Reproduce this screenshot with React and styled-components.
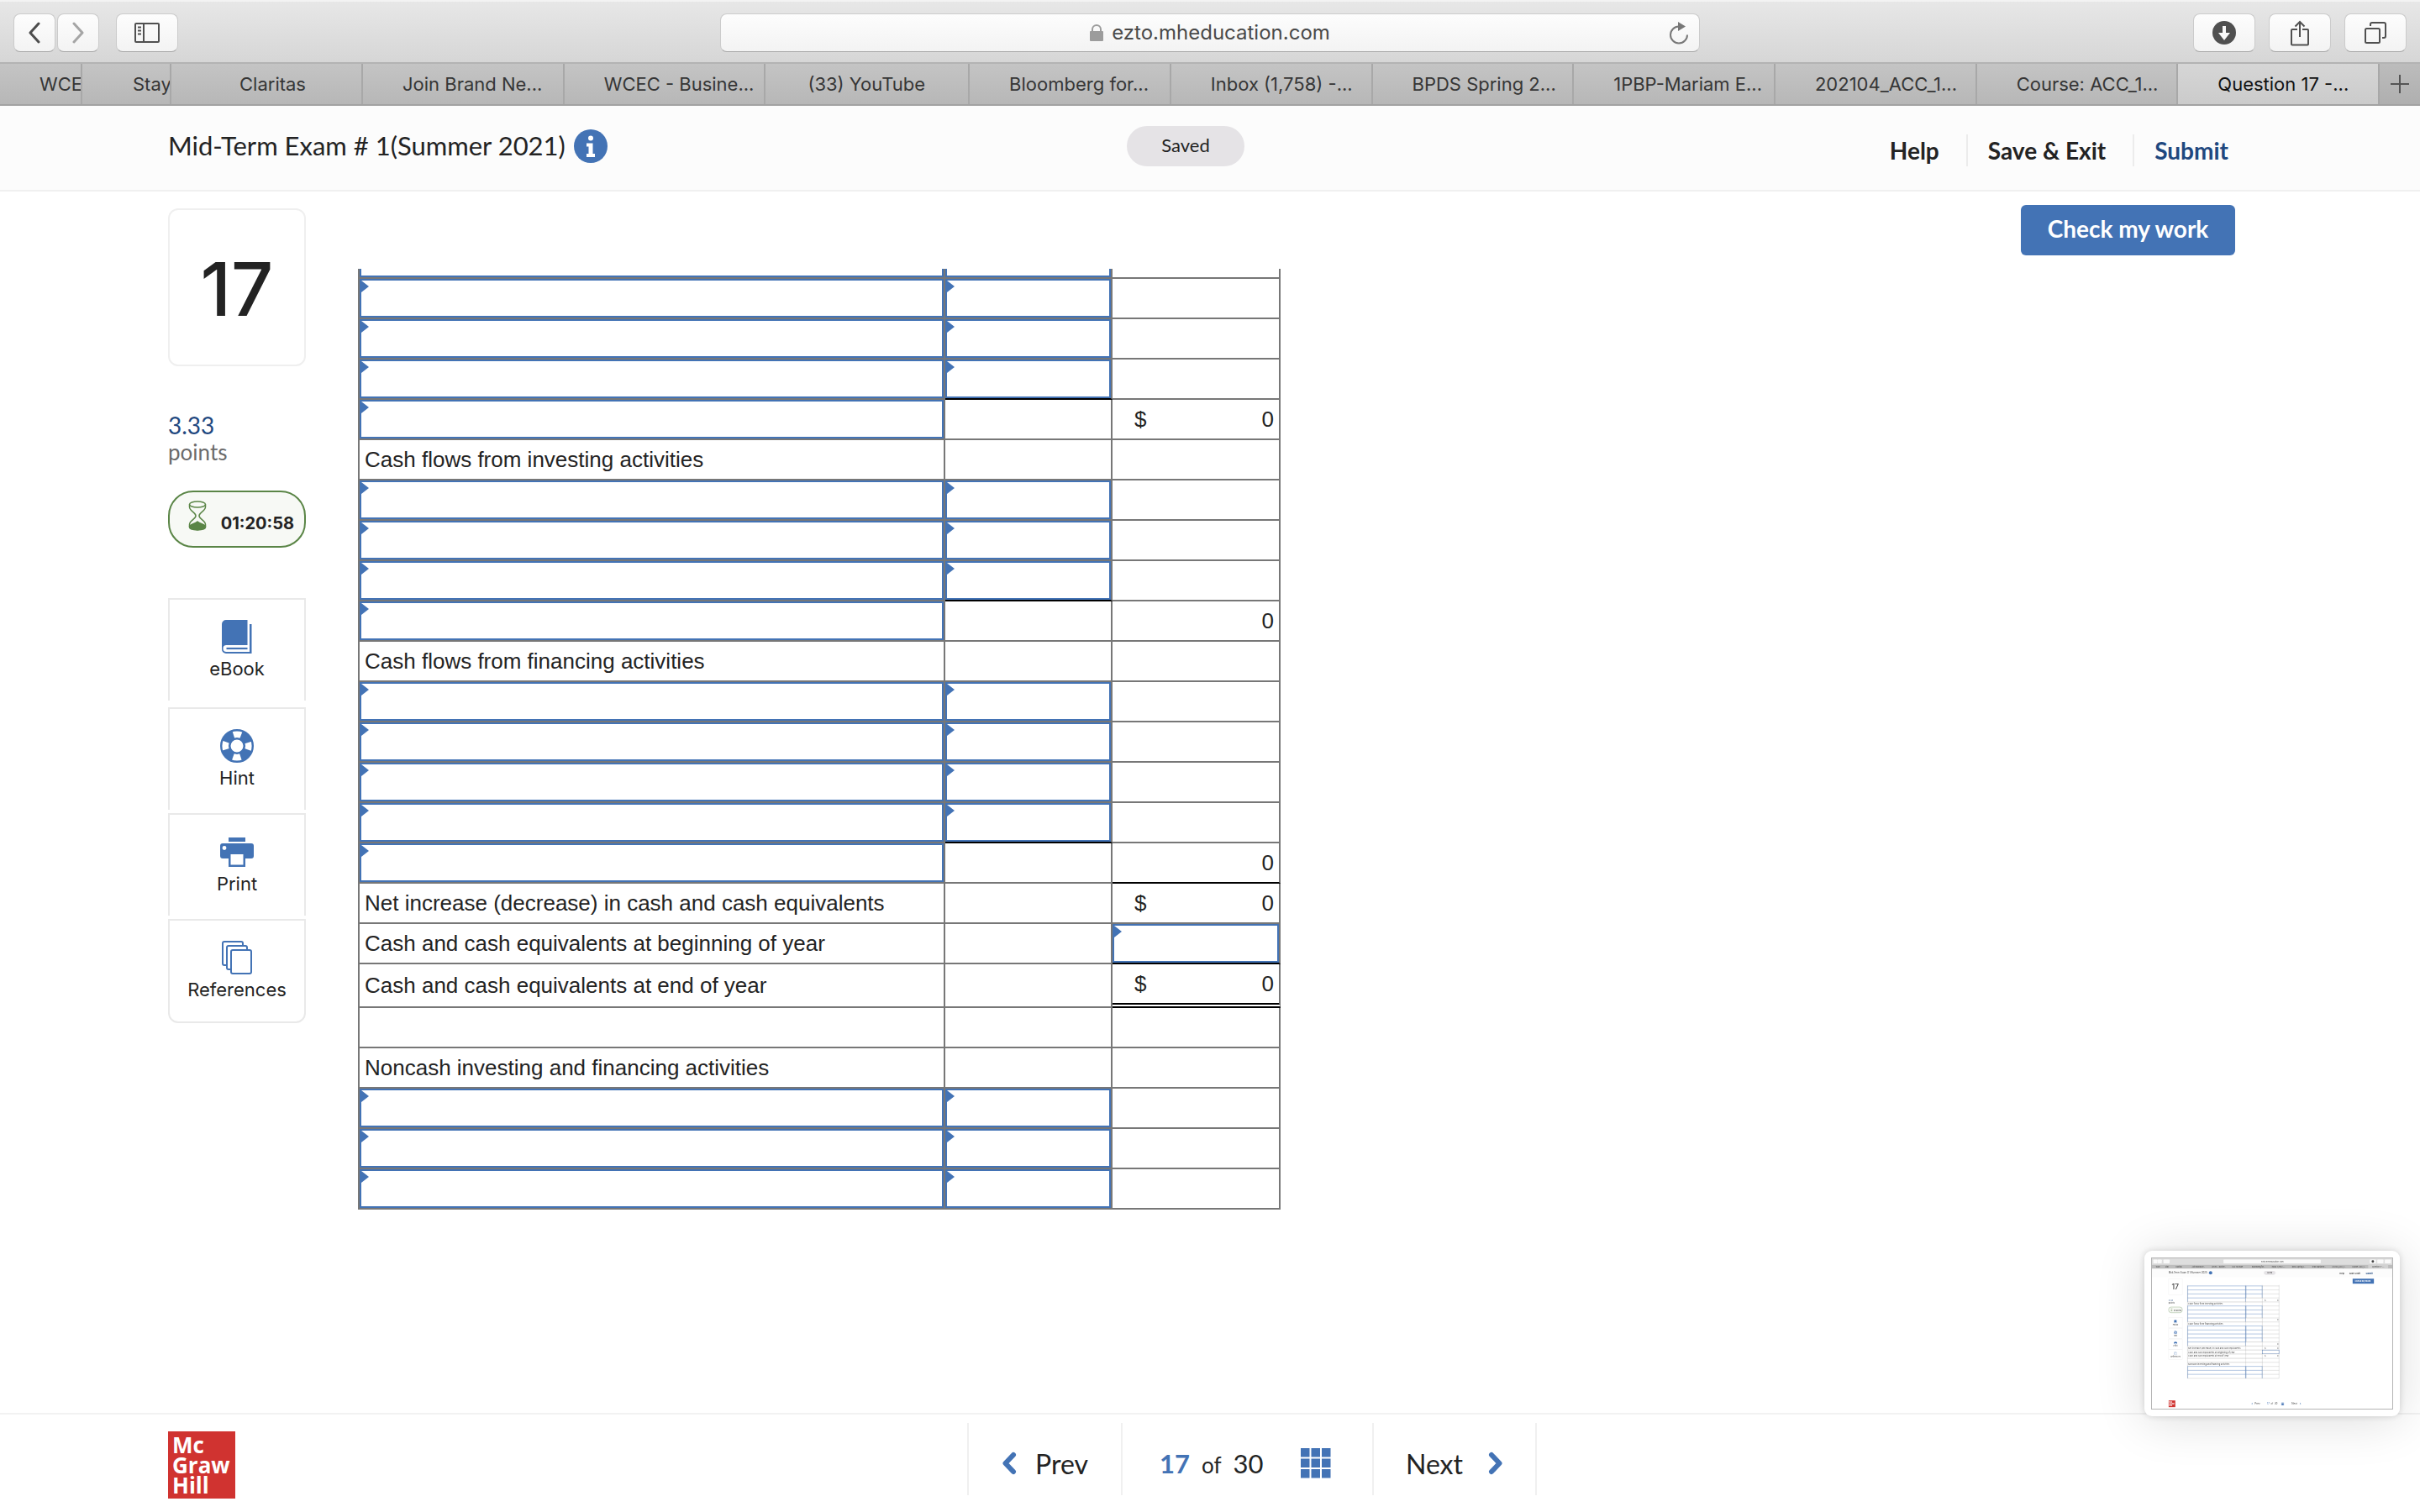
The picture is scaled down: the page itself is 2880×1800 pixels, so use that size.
import React from 'react';
import styled, { createGlobalStyle, css } from 'styled-components';

const BLUE = '#4373b5';
const NAVY = '#1f487f';
const INK = '#232323';
const LINE = '#777777';

const tabs = [
  { title: 'WCE', width: '98px', inset: '47px', clip: true },
  { title: 'Stay', width: '106px', inset: '60px', clip: true },
  { title: 'Claritas', width: '228px', inset: '81px' },
  { title: 'Join Brand Ne...' },
  { title: 'WCEC - Busine...' },
  { title: '(33) YouTube', inset: '50px' },
  { title: 'Bloomberg for...' },
  { title: 'Inbox (1,758) -...' },
  { title: 'BPDS Spring 2...' },
  { title: '1PBP-Mariam E...' },
  { title: '202104_ACC_1...' },
  { title: 'Course: ACC_1...' },
  { title: 'Question 17 -...', active: true },
];

const rows = [
  { type: 'pair' },
  { type: 'pair' },
  { type: 'pair', rule: 'amount' },
  { type: 'total', dollar: true, value: '0' },
  { type: 'label', label: 'Cash flows from investing activities' },
  { type: 'pair' },
  { type: 'pair' },
  { type: 'pair', rule: 'amount' },
  { type: 'total', value: '0' },
  { type: 'label', label: 'Cash flows from financing activities' },
  { type: 'pair' },
  { type: 'pair' },
  { type: 'pair' },
  { type: 'pair', rule: 'amount' },
  { type: 'total', value: '0', rule: 'sum' },
  { type: 'label', label: 'Net increase (decrease) in cash and cash equivalents', dollar: true, value: '0' },
  { type: 'label', label: 'Cash and cash equivalents at beginning of year', input: true, rule: 'sum' },
  { type: 'label', label: 'Cash and cash equivalents at end of year', dollar: true, value: '0', rule: 'double' },
  { type: 'label', label: '' },
  { type: 'label', label: 'Noncash investing and financing activities' },
  { type: 'pair' },
  { type: 'pair' },
  { type: 'pair' },
];

const GlobalStyle = createGlobalStyle`
  * {
    box-sizing: border-box;
  }
  body {
    margin: 0;
    background: #fff;
    color: ${INK};
    font-family: Lato, 'Open Sans', sans-serif;
  }
  button, input {
    font: inherit;
    color: inherit;
    margin: 0;
  }
  svg {
    display: block;
  }
`;

const Page = styled.div`
  min-height: 100vh;
  display: flex;
  flex-direction: column;
`;

/* browser chrome */

const Toolbar = styled.div`
  display: grid;
  grid-template-columns: 1fr minmax(0, 1166px) 1fr;
  align-items: center;
  height: 76px;
  padding: 2px 16px 0;
  background: linear-gradient(#e7e7e7, #d6d6d6);
  border-top: 2px solid #f3f3f3;
  border-bottom: 2px solid #b3b3b3;
  font-family: Inter, sans-serif;
`;

const ToolGroup = styled.div`
  display: flex;
  gap: ${(p) => p.$gap || '16px'};
  justify-content: ${(p) => (p.$end ? 'flex-end' : 'flex-start')};
`;

const ToolButton = styled.button`
  display: flex;
  align-items: center;
  justify-content: center;
  width: ${(p) => (p.$narrow ? '50px' : '74px')};
  height: 46px;
  padding: 0;
  border: 1px solid #cbcbcb;
  border-bottom-color: #a6a6a6;
  border-radius: 8px;
  background: linear-gradient(#fdfdfd, #f3f3f3);
  color: #505050;
`;

const AddressBar = styled.div`
  display: grid;
  grid-template-columns: 1fr auto 1fr;
  align-items: center;
  height: 46px;
  padding: 0 12px;
  border: 1px solid #cbcbcb;
  border-bottom-color: #a6a6a6;
  border-radius: 8px;
  background: linear-gradient(#fdfdfd, #f3f3f3);
`;

const Address = styled.label`
  grid-column: 2;
  display: flex;
  align-items: center;
  gap: 10px;
`;

const AddressInput = styled.input`
  field-sizing: content;
  padding: 0;
  border: 0;
  background: none;
  color: #4a4a4a;
  font-size: 24px;
  line-height: 32px;
`;

const ReloadButton = styled.button`
  justify-self: end;
  padding: 0;
  border: 0;
  background: none;
`;

const TabBar = styled.nav`
  display: flex;
  height: 50px;
  background: linear-gradient(#c4c4c4, #b7b7b7);
  border-bottom: 2px solid #a2a2a2;
  font-family: Inter, sans-serif;
`;

const Tab = styled.a`
  flex: ${(p) => (p.$width ? `0 0 ${p.$width}` : '1 1 0')};
  min-width: 0;
  padding-left: ${(p) => p.$inset || '47px'};
  border-right: 2px solid #a8a8a8;
  overflow: hidden;
  white-space: nowrap;
  text-decoration: none;
  font-size: 22px;
  line-height: 48px;
  color: ${(p) => (p.$active ? '#111' : '#363636')};
  background: ${(p) => (p.$active ? 'linear-gradient(#d6d6d6, #cbcbcb)' : 'none')};
`;

const NewTab = styled.button`
  display: flex;
  align-items: center;
  justify-content: center;
  width: 48px;
  padding: 0;
  border: 0;
  background: linear-gradient(#bcbcbc, #afafaf);
`;

/* exam header */

const ExamHeader = styled.header`
  display: grid;
  grid-template-columns: 1fr auto 1fr;
  height: 102px;
  padding: 0 220px 0 200px;
  background: #fcfcfc;
  border-bottom: 2px solid #f0f0f0;
`;

const TitleBlock = styled.div`
  display: flex;
  align-items: center;
  gap: 10px;
  height: 96px;
`;

const Title = styled.h1`
  margin: 0;
  padding-bottom: 2px;
  font-size: 31px;
  line-height: 40px;
  font-weight: 400;
`;

const InfoButton = styled.button`
  padding: 0;
  border: 0;
  background: none;
`;

const StatusSlot = styled.div`
  display: flex;
  align-items: center;
  height: 96px;
  padding-right: 38px;
`;

const StatusPill = styled.span`
  width: 140px;
  border-radius: 24px;
  background: #e5e3e6;
  text-align: center;
  font-size: 22px;
  line-height: 46px;
  padding-bottom: 2px;
`;

const HeaderNav = styled.nav`
  display: flex;
  align-items: center;
  justify-content: flex-end;
  height: 106px;
`;

const HeaderLink = styled.a`
  padding: 0 8px 0 24px;
  margin-left: 24px;
  border-left: ${(p) => (p.$first ? '0' : '2px solid #ececec')};
  font-size: 28px;
  line-height: 38px;
  font-weight: 700;
  text-decoration: none;
  color: ${(p) => (p.$accent ? NAVY : INK)};
`;

/* body */

const Main = styled.main`
  flex: 1;
  display: grid;
  grid-template-columns: 164px minmax(0, 1fr);
  column-gap: 62px;
  padding: 16px 220px 0 200px;
`;

const Sidebar = styled.aside`
  padding-top: 4px;
`;

const QuestionNumber = styled.div`
  height: 188px;
  border: 2px solid #efefef;
  border-radius: 12px;
  text-align: center;
  font-family: Inter, sans-serif;
  font-size: 88px;
  line-height: 188px;
  font-weight: 500;
`;

const Points = styled.div`
  padding: 54px 0 30px;
  font-size: 26px;
  line-height: 32px;
  color: #6b6b6b;
`;

const PointsValue = styled.div`
  font-size: 28px;
  color: ${NAVY};
`;

const Timer = styled.div`
  display: flex;
  align-items: center;
  justify-content: space-between;
  height: 68px;
  padding: 0 12px 8px 22px;
  border: 2px solid #5a8546;
  border-radius: 30px;
  background: #f7f9f5;
  font-family: Inter, sans-serif;
  font-size: 20px;
  font-weight: 700;
`;

const TimerText = styled.time`
  padding-top: 18px;
`;

const ToolList = styled.div`
  display: flex;
  flex-direction: column;
  gap: 4px;
  margin-top: 60px;
`;

const Tool = styled.button`
  display: flex;
  flex-direction: column;
  align-items: center;
  height: 122px;
  padding: 24px 0 0;
  border: 2px solid #e9e9e9;
  border-bottom-width: 0;
  background: #fff;
  font-family: Inter, sans-serif;
  font-size: 22px;
  line-height: 36px;
  &:first-child {
    margin-bottom: 4px;
  }
  &:last-child {
    height: 124px;
    border-bottom-width: 2px;
    border-radius: 0 0 12px 12px;
  }
`;

const Content = styled.section`
  display: flex;
  flex-direction: column;
  gap: 16px;
`;

const CheckButton = styled.button`
  align-self: flex-end;
  width: 255px;
  height: 60px;
  padding: 0 0 4px;
  border: 0;
  border-radius: 6px;
  background: ${BLUE};
  color: #fff;
  font-size: 28px;
  font-weight: 700;
`;

const Sheet = styled.table`
  width: 1098px;
  table-layout: fixed;
  border-collapse: separate;
  border-spacing: 0;
  border-left: 2px solid ${LINE};
  font-family: 'Liberation Sans', Arial, sans-serif;
  font-size: 26px;
  line-height: 30px;
`;

const Column = styled.col`
  width: ${(p) => p.$width};
`;

const Row = styled.tr`
  height: ${(p) => (p.$tall ? '52px' : '48px')};
`;

const ruleStyles = {
  single: css`border-bottom-color: #000;`,
  double: css`border-bottom: 6px double #000;`,
};

const Cell = styled.td`
  position: relative;
  padding: ${(p) => (p.$entry ? '0' : '0 6px')};
  border-right: 2px solid ${LINE};
  border-bottom: 2px solid ${LINE};
  ${(p) => ruleStyles[p.$rule]}
  ${(p) => p.$entry && css`
    &::before {
      content: '';
      position: absolute;
      top: 2px;
      left: 2px;
      border: 7px solid transparent;
      border-left: 9px solid ${BLUE};
      border-right: 0;
    }
  `}
`;

const CutCell = styled.td`
  height: 12px;
  padding: 0;
  border-right: 2px solid ${LINE};
  border-bottom: 2px solid ${LINE};
  ${(p) => p.$entry && css`
    box-shadow: inset 2px -2px ${BLUE}, inset -2px 0 ${BLUE};
  `}
`;

const Entry = styled.input`
  display: block;
  width: 100%;
  height: 46px;
  padding: 0 14px;
  border: 2px solid ${BLUE};
  border-radius: 0;
  background: #fff;
`;

const Amount = styled.div`
  display: flex;
  justify-content: space-between;
  padding-left: 20px;
`;

/* footer */

const Footer = styled.footer`
  display: grid;
  grid-template-columns: 1fr auto 1fr;
  height: 118px;
  padding: 0 100px 0 200px;
  border-top: 2px solid #f2f2f2;
  background: #fff;
`;

const Logo = styled.div`
  width: 80px;
  height: 80px;
  margin-top: 20px;
  padding: 4px 5px;
  background: #d03330;
  color: #fff;
  font-family: 'Open Sans', 'Noto Sans', sans-serif;
  font-size: 26px;
  line-height: 24px;
  font-weight: 700;
`;

const Pager = styled.nav`
  display: flex;
  height: 86px;
  margin-top: 10px;
  border-left: 2px solid #f0f0f0;
`;

const PagerButton = styled.button`
  display: flex;
  align-items: center;
  justify-content: center;
  gap: ${(p) => (p.$next ? '30px' : '22px')};
  width: ${(p) => (p.$next ? '194px' : '183px')};
  padding: 10px 0 0;
  border: 0;
  border-right: 2px solid #f0f0f0;
  background: none;
  font-size: 32px;
`;

const PagerStatus = styled.div`
  display: flex;
  align-items: center;
  justify-content: space-between;
  width: 299px;
  padding: 10px 49px 0 44px;
  border-right: 2px solid #f0f0f0;
  font-size: 31px;
`;

const Position = styled.span`
  display: flex;
  align-items: baseline;
  gap: 14px;
`;

const Current = styled.b`
  color: ${BLUE};
`;

const Of = styled.span`
  font-size: 26px;
`;

const GridButton = styled.button`
  padding: 0;
  border: 0;
  background: none;
`;

const Preview = styled.figure`
  position: fixed;
  right: 24px;
  bottom: 114px;
  width: 304px;
  margin: 0;
  padding: 8px;
  border-radius: 9px;
  background: #fff;
  box-shadow: 0 0 8px rgba(0, 0, 0, 0.16), 0 4px 60px rgba(0, 0, 0, 0.14);
`;

const PreviewImage = styled.svg`
  width: 100%;
  height: auto;
  border: 1px solid #b4b4b4;
`;

function Chevron({ right }) {
  return (
    <svg width="18" height="28" viewBox="0 0 18 28" fill="none" stroke={BLUE} strokeWidth="6" strokeLinecap="round" strokeLinejoin="round">
      <path d={right ? 'M4 4 13.5 14 4 24' : 'M14 4 4.5 14 14 24'} />
    </svg>
  );
}

function ArrowIcon({ right }) {
  return (
    <svg width="14" height="26" viewBox="0 0 14 26" fill="none" stroke={right ? '#a5a5a5' : '#4c4c4c'} strokeWidth="3" strokeLinecap="round" strokeLinejoin="round">
      <path d={right ? 'M2 2 12 13 2 24' : 'M12 2 2 13 12 24'} />
    </svg>
  );
}

function SidebarIcon() {
  return (
    <svg width="30" height="24" viewBox="0 0 30 24" fill="none" stroke="currentColor" strokeWidth="2">
      <rect x="1" y="1" width="28" height="22" rx="1" />
      <path d="M11 1v22M4 5.5h4M4 9.5h4M4 13.500h4" />
    </svg>
  );
}

function LockIcon() {
  return (
    <svg width="16" height="20" viewBox="0 0 16 20">
      <rect y="8" width="16" height="12" rx="1" fill="#9c9c9c" />
      <path d="M3 9V6a5 5 0 0 1 10 0v3" fill="none" stroke="#9c9c9c" strokeWidth="2" />
    </svg>
  );
}

function ReloadIcon() {
  return (
    <svg width="24" height="27" viewBox="0 0 24 27">
      <path d="M12 5.500a10 10 0 1 0 10 10" fill="none" stroke="#777" strokeWidth="2" />
      <path d="M11 0v11l9-5.500z" fill="#777" />
    </svg>
  );
}

function DownloadIcon() {
  return (
    <svg width="28" height="28" viewBox="0 0 28 28">
      <circle cx="14" cy="14" r="14" fill="#505050" />
      <path d="M12 6h4v8h5l-7 9-7-9h5z" fill="#fafafa" />
    </svg>
  );
}

function ShareIcon() {
  return (
    <svg width="24" height="31" viewBox="0 0 24 31" fill="none" stroke="currentColor" strokeWidth="2">
      <path d="M9 11H3a1 1 0 0 0-1 1v16.500a1 1 0 0 0 1 1h18a1 1 0 0 0 1-1V12a1 1 0 0 0-1-1h-6M12 20V2M6.500 7.500 12 2l5.500 5.500" />
    </svg>
  );
}

function TabsIcon() {
  return (
    <svg width="26" height="26" viewBox="0 0 26 26" fill="none" stroke="currentColor" strokeWidth="2">
      <rect x="1" y="8" width="17" height="17" rx="1.500" />
      <path d="M7 5V3a2 2 0 0 1 2-2h14a2 2 0 0 1 2 2v14a2 2 0 0 1-2 2h-2" />
    </svg>
  );
}

function InfoIcon() {
  return (
    <svg width="40" height="40" viewBox="0 0 40 40">
      <circle cx="20" cy="20" r="20" fill={BLUE} />
      <circle cx="20" cy="10.500" r="3" fill="#fff" />
      <path d="M15 16.500h7.500V29h2.500v4H15v-4h2.500v-8.500H15z" fill="#fff" />
    </svg>
  );
}

function HourglassIcon() {
  return (
    <svg width="22" height="36" viewBox="0 0 22 36" fill="none" stroke="#5a8546" strokeWidth="1.500">
      <ellipse cx="11" cy="4.500" rx="9.500" ry="3.500" />
      <path d="M1.500 4.500v3c0 5 7.500 6.500 7.500 10.500s-7.500 5.500-7.500 10.500v3c0 4.500 19 4.500 19 0v-3c0-5-7.500-6.500-7.500-10.500s7.500-5.500 7.500-10.500v-3" />
      <path d="M1.500 31c0 4.500 19 4.500 19 0 0-3-6-3-9.500-6-3.500 3-9.500 3-9.500 6z" fill="#5a8546" />
    </svg>
  );
}

function BookIcon() {
  return (
    <svg width="36" height="40" viewBox="0 0 36 40">
      <path d="M5 0h25.500v30H5.500a4 4 0 0 0 0 8H33V5h2.500v35H5a5 5 0 0 1-5-5V5a5 5 0 0 1 5-5z" fill={BLUE} />
      <path d="M5.500 34h25" stroke={BLUE} strokeWidth="2.200" />
    </svg>
  );
}

function LifebuoyIcon() {
  return (
    <svg width="40" height="40" viewBox="0 0 40 40" fill="none" stroke={BLUE}>
      <circle cx="20" cy="20" r="13.500" strokeWidth="11" strokeDasharray="12.200 9" strokeDashoffset="-4.500" />
      <circle cx="20" cy="20" r="18.800" strokeWidth="2.400" />
      <circle cx="20" cy="20" r="8.800" strokeWidth="2.600" />
    </svg>
  );
}

function PrinterIcon() {
  return (
    <svg width="40" height="40" viewBox="0 0 40 40" fill={BLUE}>
      <path d="M10 3h20v5H10z" />
      <path fillRule="evenodd" d="M3 10h34a3 3 0 0 1 3 3v12a3 3 0 0 1-3 3h-7v10H10V28H3a3 3 0 0 1-3-3V13a3 3 0 0 1 3-3zM12.500 23v12.500h15V23z" />
      <circle cx="5" cy="15.500" r="2.400" fill="#fff" />
    </svg>
  );
}

function ReferencesIcon() {
  return (
    <svg width="36" height="40" viewBox="0 0 36 40" fill="#fff" stroke={BLUE} strokeWidth="2">
      <rect x="1" y="1" width="24" height="28" rx="2" />
      <rect x="6" y="6" width="24" height="28" rx="2" />
      <rect x="11" y="11" width="24" height="28" rx="2" />
    </svg>
  );
}

function GridIcon() {
  const steps = [0, 12.500, 25];
  return (
    <svg width="36" height="36" viewBox="0 0 36 36" fill={BLUE}>
      {steps.map((y) => steps.map((x) => <rect key={`${x}-${y}`} x={x} y={y} width="10.500" height="10.500" />))}
    </svg>
  );
}

function SheetRow({ row, index }) {
  const n = index + 1;
  return (
    <Row $tall={row.rule === 'double'}>
      {row.type === 'label' ? (
        <Cell>{row.label}</Cell>
      ) : (
        <Cell $entry><Entry aria-label={`Account, row ${n}`} /></Cell>
      )}
      {row.type === 'pair' ? (
        <Cell $entry $rule={row.rule === 'amount' ? 'single' : undefined}>
          <Entry aria-label={`Amount, row ${n}`} />
        </Cell>
      ) : (
        <Cell />
      )}
      <Cell $entry={row.input} $rule={{ sum: 'single', double: 'double' }[row.rule]}>
        {row.input && <Entry aria-label={row.label} />}
        {row.value && (
          <Amount>
            <span>{row.dollar ? '$' : ''}</span>
            <span>{row.value}</span>
          </Amount>
        )}
      </Cell>
    </Row>
  );
}

const rowTop = (i) => 331 + i * 48 + (i > 17 ? 4 : 0);

function PagePreview() {
  return (
    <PreviewImage viewBox="0 0 2880 1800" fontFamily="Inter, sans-serif" fontSize="25" fill="#444" aria-hidden="true">
      <rect width="2880" height="76" fill="#dedede" />
      <rect y="76" width="2880" height="50" fill="#bdbdbd" />
      <rect x="2591" y="76" width="240" height="50" fill="#d2d2d2" />
      {[[16, 50], [68, 50], [138, 74], [857, 1166], [2610, 74], [2700, 74], [2790, 74]].map(([x, w]) => (
        <rect key={x} x={x} y="15" width={w} height="46" rx="8" fill="#fafafa" />
      ))}
      <circle cx="2647" cy="38" r="15" />
      <text x="1310" y="48">ezto.mheducation.com</text>
      {tabs.map((tab, i) => (
        <text key={tab.title} x={[47, 158, 284][i] || 478 + (i - 3) * 240} y="110" fontSize="21">{tab.title}</text>
      ))}
      <rect y="126" width="2880" height="100" fill="#fcfcfc" />
      <text x="200" y="184" fontSize="29">Mid-Term Exam # 1(Summer 2021)</text>
      <circle cx="703" cy="174" r="20" fill={BLUE} />
      <rect x="1341" y="150" width="140" height="48" rx="24" fill="#e5e3e6" />
      <text x="1380" y="182" fontSize="21">Saved</text>
      <g fontWeight="700">
        <text x="2249" y="188">Help</text>
        <text x="2363" y="188">Save &amp; Exit</text>
        <text x="2562" y="188" fill={NAVY}>Submit</text>
        <rect x="2405" y="244" width="255" height="60" fill={BLUE} />
        <text x="2432" y="283" fill="#fff">Check my work</text>
      </g>
      <g fill="none" stroke="#ededed" strokeWidth="4">
        <rect x="200" y="248" width="164" height="188" />
        <rect x="200" y="712" width="164" height="122" />
        <rect x="200" y="842" width="164" height="122" />
        <rect x="200" y="968" width="164" height="122" />
        <rect x="200" y="1094" width="164" height="122" />
      </g>
      <text x="236" y="376" fontSize="88" fontWeight="500">17</text>
      <text x="200" y="516" fill={NAVY}>3.33</text>
      <text x="200" y="548">points</text>
      <rect x="200" y="584" width="164" height="68" rx="30" fill="#f7f9f5" stroke="#5a8546" strokeWidth="3" />
      <text x="263" y="630" fontSize="20" fontWeight="700">01:20:58</text>
      <svg x="225" y="596" width="22" height="36"><HourglassIcon /></svg>
      <svg x="264" y="738" width="40" height="40"><BookIcon /></svg>
      <svg x="262" y="868" width="40" height="40"><LifebuoyIcon /></svg>
      <svg x="262" y="994" width="40" height="40"><PrinterIcon /></svg>
      <svg x="264" y="1120" width="40" height="40"><ReferencesIcon /></svg>
      <g fontSize="22" textAnchor="middle">
        <text x="282" y="804">eBook</text>
        <text x="282" y="934">Hint</text>
        <text x="282" y="1060">Print</text>
        <text x="282" y="1186">References</text>
      </g>
      <path d="M427 320V1439M1124 320V1439M1323 320V1439M1523 320V1439M427 1439H1523" stroke="#a5a5a5" strokeWidth="3" />
      {rows.map((row, i) => {
        const y = rowTop(i);
        const color = row.type === 'label' ? '#a5a5a5' : BLUE;
        return (
          <g key={i}>
            <path d={`M427 ${y}H1124`} stroke={color} strokeWidth="4" />
            <path d={`M1124 ${y}H1323`} stroke={row.type === 'pair' ? BLUE : '#a5a5a5'} strokeWidth="4" />
            <path d={`M1323 ${y}H1523`} stroke="#a5a5a5" strokeWidth="3" />
            {row.type !== 'label' && <path d={`M429 ${y}v47M1122 ${y}v47`} stroke={BLUE} strokeWidth="4" />}
            {row.type === 'pair' && <path d={`M1127 ${y}v47M1321 ${y}v47`} stroke={BLUE} strokeWidth="4" />}
            {row.input && <rect x="1325" y={y} width="197" height="47" fill="none" stroke={BLUE} strokeWidth="4" />}
            {row.label && <text x="434" y={y + 34}>{row.label}</text>}
            {row.dollar && <text x="1350" y={y + 34}>$</text>}
            {row.value && <text x="1500" y={y + 34}>{row.value}</text>}
          </g>
        );
      })}
      <rect x="200" y="1704" width="80" height="80" fill="#d03330" />
      <g fill="#fff" fontWeight="700" fontSize="25">
        <text x="205" y="1730">Mc</text>
        <text x="205" y="1753">Graw</text>
        <text x="205" y="1777">Hill</text>
      </g>
      <svg x="1191" y="1729" width="18" height="28"><Chevron /></svg>
      <svg x="1770" y="1729" width="18" height="28"><Chevron right /></svg>
      <svg x="1548" y="1727" width="36" height="36"><GridIcon /></svg>
      <g fontSize="30">
        <text x="1232" y="1754">Prev</text>
        <text x="1380" y="1752" fill={BLUE}>17</text>
        <text x="1426" y="1752" fontSize="26">of</text>
        <text x="1467" y="1752">30</text>
        <text x="1674" y="1754">Next</text>
      </g>
    </PreviewImage>
  );
}

const App = () => {
  return (
    <Page>
      <GlobalStyle />
      <Toolbar>
        <ToolGroup $gap="20px">
          <ToolGroup $gap="2px">
            <ToolButton $narrow aria-label="Back"><ArrowIcon /></ToolButton>
            <ToolButton $narrow aria-label="Forward"><ArrowIcon right /></ToolButton>
          </ToolGroup>
          <ToolButton aria-label="Show sidebar"><SidebarIcon /></ToolButton>
        </ToolGroup>
        <AddressBar>
          <Address>
            <LockIcon />
            <AddressInput aria-label="Address" defaultValue="ezto.mheducation.com" />
          </Address>
          <ReloadButton aria-label="Reload"><ReloadIcon /></ReloadButton>
        </AddressBar>
        <ToolGroup $end>
          <ToolButton aria-label="Downloads"><DownloadIcon /></ToolButton>
          <ToolButton aria-label="Share"><ShareIcon /></ToolButton>
          <ToolButton aria-label="Tab overview"><TabsIcon /></ToolButton>
        </ToolGroup>
      </Toolbar>
      <TabBar>
        {tabs.map((tab) => (
          <Tab key={tab.title} href="#" $width={tab.width} $inset={tab.inset} $active={tab.active}>
            {tab.title}
          </Tab>
        ))}
        <NewTab aria-label="New tab">
          <svg width="22" height="22" viewBox="0 0 22 22" stroke="#555" strokeWidth="2">
            <path d="M11 0v22M0 11h22" />
          </svg>
        </NewTab>
      </TabBar>

      <ExamHeader>
        <TitleBlock>
          <Title>Mid-Term Exam # 1(Summer 2021)</Title>
          <InfoButton aria-label="Exam information"><InfoIcon /></InfoButton>
        </TitleBlock>
        <StatusSlot>
          <StatusPill>Saved</StatusPill>
        </StatusSlot>
        <HeaderNav>
          <HeaderLink href="#" $first>Help</HeaderLink>
          <HeaderLink href="#">Save &amp; Exit</HeaderLink>
          <HeaderLink href="#" $accent>Submit</HeaderLink>
        </HeaderNav>
      </ExamHeader>

      <Main>
        <Sidebar>
          <QuestionNumber>17</QuestionNumber>
          <Points>
            <PointsValue>3.33</PointsValue>
            points
          </Points>
          <Timer>
            <HourglassIcon />
            <TimerText>01:20:58</TimerText>
          </Timer>
          <ToolList>
            <Tool><BookIcon />eBook</Tool>
            <Tool><LifebuoyIcon />Hint</Tool>
            <Tool><PrinterIcon />Print</Tool>
            <Tool><ReferencesIcon />References</Tool>
          </ToolList>
        </Sidebar>
        <Content>
          <CheckButton>Check my work</CheckButton>
          <Sheet>
            <colgroup>
              <Column $width="697px" />
              <Column $width="199px" />
              <Column $width="200px" />
            </colgroup>
            <tbody>
              <tr>
                <CutCell $entry />
                <CutCell $entry />
                <CutCell />
              </tr>
              {rows.map((row, i) => <SheetRow key={i} row={row} index={i} />)}
            </tbody>
          </Sheet>
        </Content>
      </Main>

      <Footer>
        <Logo>Mc<br />Graw<br />Hill</Logo>
        <Pager>
          <PagerButton><Chevron />Prev</PagerButton>
          <PagerStatus>
            <Position>
              <Current>17</Current>
              <Of>of</Of>
              <span>30</span>
            </Position>
            <GridButton aria-label="Question list"><GridIcon /></GridButton>
          </PagerStatus>
          <PagerButton $next>Next<Chevron right /></PagerButton>
        </Pager>
      </Footer>

      <Preview>
        <PagePreview />
      </Preview>
    </Page>
  );
};

export default App;
